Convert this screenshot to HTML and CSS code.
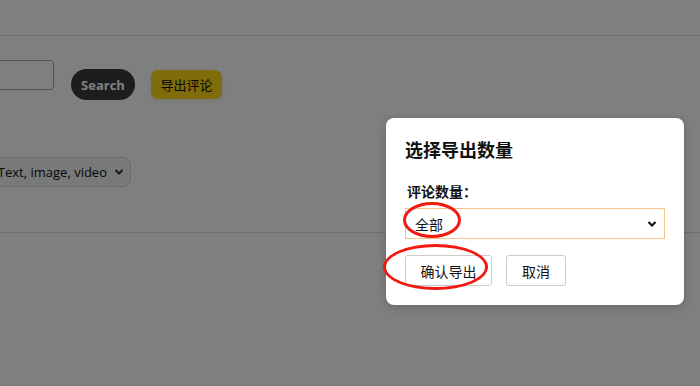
FILE: index.html
```html
<!DOCTYPE html>
<html>
<head>
  <meta charset="utf-8">
  <title>导出评论</title>
  <link rel="stylesheet" href="styles.css">
</head>
<body>
  <div class="page">
    <div class="top-bar"></div>
    <div class="toolbar">
      <input class="search-input" type="text">
      <button class="search-btn">Search</button>
      <button class="export-btn">导出评论</button>
    </div>
    <div class="filter-row">
      <div class="filter-select">
        <span>Text, image, video</span>
        <svg width="10" height="8" viewBox="0 0 10 8"><path d="M1.5 2l3.5 3.5L8.5 2" fill="none" stroke="#333" stroke-width="2"/></svg>
      </div>
    </div>
    <hr class="divider">
  </div>

  <div class="mask"></div>

  <div class="dialog">
    <div class="dialog-title">选择导出数量</div>
    <label class="dialog-label">评论数量：</label>
    <div class="dialog-select">
      <span>全部</span>
      <svg width="10" height="8" viewBox="0 0 10 8"><path d="M1.5 2l3.5 3.5L8.5 2" fill="none" stroke="#111" stroke-width="2.2"/></svg>
    </div>
    <div class="dialog-actions">
      <button class="btn btn-confirm">确认导出</button>
      <button class="btn btn-cancel">取消</button>
    </div>
  </div>

  <!-- red annotation rings -->
  <div class="ring ring-option"></div>
  <div class="ring ring-confirm"></div>
</body>
</html>
```

FILE: styles.css
```css
body {
  margin: 0;
  font-family: "Open Sans", "Noto Sans CJK SC", sans-serif;
  background: #ffffff;
  overflow: hidden;
}

.page {
  width: 700px;
  height: 386px;
}

.top-bar {
  height: 35px;
  border-bottom: 1px solid #dddddd;
}

.toolbar {
  display: flex;
  align-items: flex-start;
  margin-top: 24px;
}

.search-input {
  width: 200px;
  height: 30px;
  box-sizing: border-box;
  margin: 0 17px 0 -146px;
  border: 1px solid #a6a6a6;
  border-radius: 4px;
}

.search-btn {
  margin-top: 9px;
  width: 64px;
  height: 31px;
  border: none;
  border-radius: 16px;
  background: #383b3d;
  color: #ffffff;
  font-family: "Open Sans", sans-serif;
  font-weight: bold;
  font-size: 13px;
  padding: 0;
}

.export-btn {
  margin: 10px 0 0 16px;
  width: 71px;
  height: 29px;
  border: none;
  border-radius: 7px;
  background: #ffd814;
  color: #0f1111;
  font-family: "Noto Sans CJK SC", sans-serif;
  font-size: 13px;
  padding: 0;
  box-shadow: 0 2px 5px rgba(213, 217, 217, 0.5);
}

.filter-row {
  margin-top: 57px;
}

.filter-select {
  width: 200px;
  height: 30px;
  box-sizing: border-box;
  margin-left: -69px;
  padding: 0 6px 0 0;
  display: flex;
  align-items: center;
  justify-content: flex-end;
  gap: 7px;
  background: #f0f2f2;
  border: 1px solid #d5d9d9;
  border-radius: 8px;
  font-size: 13px;
  color: #0f1111;
  white-space: nowrap;
}

.divider {
  margin: 45px 0 0 0;
  border: 0;
  border-top: 1px solid #dddddd;
}

.mask {
  position: absolute;
  inset: 0;
  background: rgba(0, 0, 0, 0.5);
}

.dialog {
  position: absolute;
  left: 386px;
  top: 118px;
  width: 298px;
  box-sizing: border-box;
  padding: 19px;
  background: #ffffff;
  border-radius: 8px;
  box-shadow: 0 2px 10px rgba(0, 0, 0, 0.2);
  font-family: "Noto Sans CJK SC", sans-serif;
  color: #111111;
}

.dialog-title {
  font-size: 18px;
  font-weight: bold;
  line-height: 24px;
  margin-bottom: 21px;
}

.dialog-label {
  display: block;
  font-size: 14px;
  font-weight: bold;
  line-height: 18px;
  margin: 0 0 8px 2px;
}

.dialog-select {
  height: 31px;
  box-sizing: border-box;
  display: flex;
  align-items: center;
  justify-content: space-between;
  padding: 0 7px 0 9px;
  border: 1px solid #f9c48c;
  font-size: 14px;
}

.dialog-actions {
  display: flex;
  gap: 14px;
  margin-top: 16px;
}

.btn {
  height: 31px;
  padding: 0;
  background: #ffffff;
  border: 1px solid #cccccc;
  border-radius: 3px;
  font-family: "Noto Sans CJK SC", sans-serif;
  font-size: 14px;
  color: #111111;
  white-space: nowrap;
}

.btn-confirm {
  width: 87px;
}

.btn-cancel {
  width: 60px;
}

.ring {
  position: absolute;
  border: 3px solid #f01a10;
  border-radius: 50%;
}

.ring-option {
  left: 403px;
  top: 202px;
  width: 52px;
  height: 30px;
}

.ring-confirm {
  left: 383px;
  top: 244px;
  width: 99px;
  height: 40px;
}
```
